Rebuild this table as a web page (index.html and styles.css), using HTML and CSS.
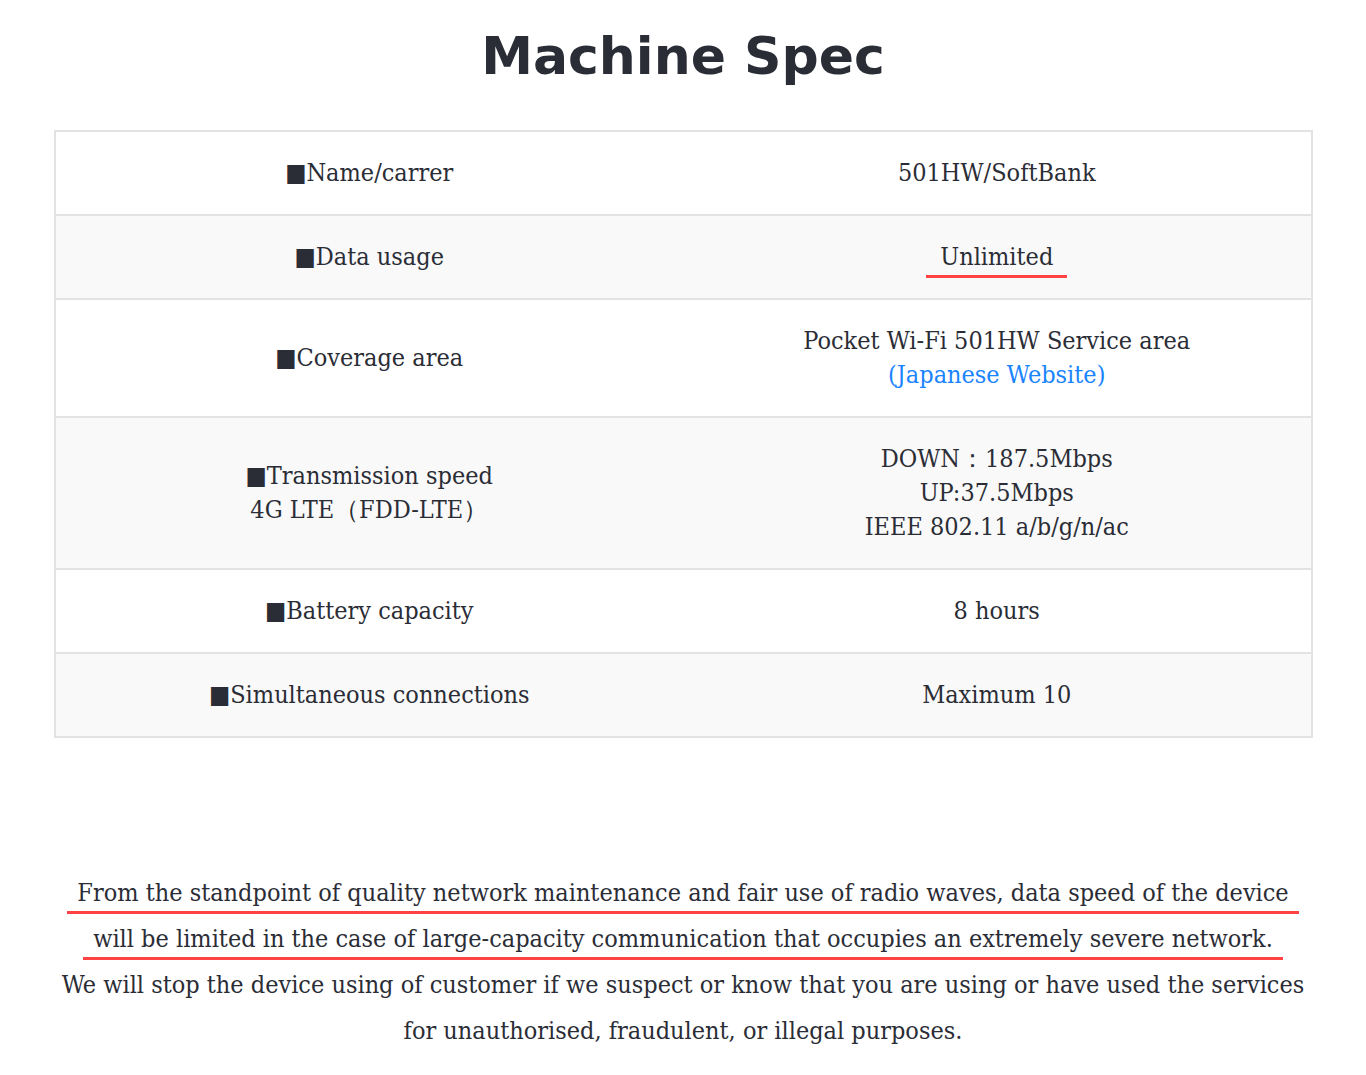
FILE: index.html
```html
<!DOCTYPE html>
<html lang="en">
<head>
<meta charset="utf-8">
<title>Machine Spec</title>
<link rel="stylesheet" href="styles.css">
</head>
<body>
<main class="page">
  <h1 class="title">Machine Spec</h1>
  <table class="spec">
    <tbody>
      <tr><td>■Name/carrer</td><td>501HW/SoftBank</td></tr>
      <tr><td>■Data usage</td><td><span class="mark">Unlimited</span></td></tr>
      <tr><td>■Coverage area</td><td>Pocket Wi-Fi 501HW Service area<br><a class="link" href="#">(Japanese Website)</a></td></tr>
      <tr><td>■Transmission speed<br>4G LTE（FDD-LTE）</td><td>DOWN：187.5Mbps<br>UP:37.5Mbps<br>IEEE 802.11 a/b/g/n/ac</td></tr>
      <tr><td>■Battery capacity</td><td>8 hours</td></tr>
      <tr><td>■Simultaneous connections</td><td>Maximum 10</td></tr>
    </tbody>
  </table>
  <p class="note"><span class="mark-line">From the standpoint of quality network maintenance and fair use of radio waves, data speed of the device</span><br><span class="mark-line">will be limited in the case of large-capacity communication that occupies an extremely severe network.</span><br>We will stop the device using of customer if we suspect or know that you are using or have used the services<br>for unauthorised, fraudulent, or illegal purposes.</p>
</main>
</body>
</html>
```
FILE: styles.css
```css
html, body {
  margin: 0;
  padding: 0;
  background: #ffffff;
}
body {
  color: #2b2d36;
  font-family: "DejaVu Serif Condensed", "DejaVu Serif", serif;
}
.page {
  width: 1259px;
  margin: 0 auto;
  padding-top: 22px;
}
.title {
  margin: 0 0 40px;
  text-align: center;
  font-family: "DejaVu Sans", "Noto Sans", sans-serif;
  font-weight: 700;
  font-size: 52px;
  line-height: 68px;
  color: #2b2d36;
}
.spec {
  width: 100%;
  border-collapse: collapse;
  border: 2px solid #e3e3e3;
  table-layout: fixed;
}
.spec tr {
  border-top: 2px solid #e3e3e3;
}
.spec tr:nth-child(even) {
  background: #f9f9f9;
}
.spec td {
  text-align: center;
  font-size: 25px;
  line-height: 34px;
  padding: 24px 10px;
}
.mark {
  padding: 0 14px 4px;
  border-bottom: 3px solid #ff4343;
}
.link {
  color: #1a84ff;
  text-decoration: none;
}
.note {
  margin: 132px 0 0;
  text-align: center;
  font-size: 25px;
  line-height: 46px;
}
.mark-line {
  padding: 0 10px 4px;
  border-bottom: 3px solid #ff4343;
}
```
